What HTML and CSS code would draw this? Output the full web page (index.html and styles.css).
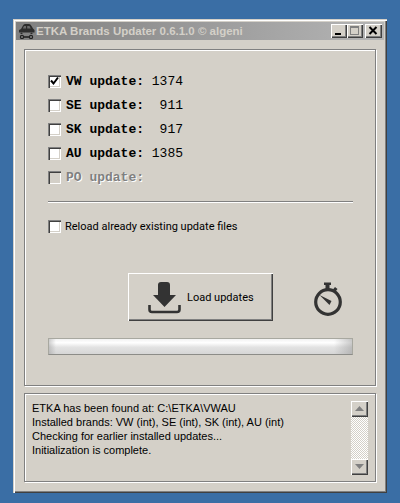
FILE: index.html
```html
<!DOCTYPE html>
<html lang="en">
<head>
<meta charset="utf-8">
<title>ETKA Brands Updater</title>
<link rel="stylesheet" href="styles.css">
</head>
<body>
<div class="window">
  <div class="titlebar">
    <svg class="app-icon" width="17" height="16" viewBox="0 0 17 16">
      <path d="M1 9.5 V7 L3 6 L5 2.5 Q5.5 1 7 1 H11 Q12.5 1 13.5 3 L15 5.5 L16.5 7 V9.5 Z" fill="#2c2c2c"/>
      <path d="M6 3 H8 V5.5 H4.8 Z M9.2 3 H11.5 L12.8 5.5 H9.2 Z" fill="#6a6a6a"/>
      <path d="M2 11 L3.5 9.5 L5 11 Z M12 11 L13.5 9.5 L15 11 Z" fill="#2c2c2c"/>
      <circle cx="4" cy="14" r="1.6" fill="none" stroke="#222" stroke-width="1.2"/>
      <circle cx="13" cy="14" r="1.6" fill="none" stroke="#222" stroke-width="1.2"/>
      <path d="M5.5 14 H11.5" stroke="#222" stroke-width="1.6"/>
    </svg>
    <span class="title-text">ETKA Brands Updater 0.6.1.0 © algeni</span>
    <div class="controls">
      <div class="ctl">
        <svg width="16" height="14" viewBox="0 0 16 14"><path d="M4 9 H10 V11 H4 Z" fill="#000"/></svg>
      </div>
      <div class="ctl ctl-max">
        <svg width="16" height="14" viewBox="0 0 16 14"><path d="M3 2 H12 V11 H3 Z M4 4 V10 H11 V4 Z" fill="#808080" fill-rule="evenodd"/></svg>
      </div>
      <div class="ctl ctl-close">
        <svg width="17" height="14" viewBox="0 0 17 14"><path d="M4.5 3 L11.5 10 M11.5 3 L4.5 10" stroke="#000" stroke-width="2" fill="none"/></svg>
      </div>
    </div>
  </div>

  <section class="group group-main">
    <div class="brand-list">
      <label class="brand">
        <span class="check"><svg width="11" height="11" viewBox="0 0 11 11"><path d="M2 4.5 L4.5 7.5 L9 1.5" stroke="#000" stroke-width="2" fill="none"/></svg></span>
        <span class="mono"><b>VW update:</b> 1374</span>
      </label>
      <label class="brand">
        <span class="check"></span>
        <span class="mono"><b>SE update:</b>  911</span>
      </label>
      <label class="brand">
        <span class="check"></span>
        <span class="mono"><b>SK update:</b>  917</span>
      </label>
      <label class="brand">
        <span class="check"></span>
        <span class="mono"><b>AU update:</b> 1385</span>
      </label>
      <label class="brand brand-off">
        <span class="check check-off"></span>
        <span class="mono"><b>PO update:</b></span>
      </label>
    </div>
    <div class="separator"></div>
    <label class="reload">
      <span class="check"></span>
      <span class="reload-text">Reload already existing update files</span>
    </label>
    <div class="action-row">
      <button class="load" type="button">
        <svg width="33" height="33" viewBox="0 0 33 33">
          <path d="M10 4 Q10 1 13 1 H19 Q22 1 22 4 V14 H28 L16.5 26 L5 14 H10 Z" fill="#333"/>
          <path d="M1.5 24 V28.5 Q1.5 31 4 31 H29 Q31.5 31 31.5 28.5 V24" fill="none" stroke="#333" stroke-width="2.6"/>
        </svg>
        <span class="load-text">Load updates</span>
      </button>
      <svg class="watch" width="30" height="34" viewBox="0 0 30 34">
        <path d="M11 0.5 H18 V3 H16.5 V8 H12.5 V3 H11 Z" fill="#333"/>
        <path d="M22 5 L24.5 7 L22.5 9.5 L20 7.5 Z" fill="#333"/>
        <circle cx="15" cy="20" r="12.3" fill="none" stroke="#333" stroke-width="3.2"/>
        <path d="M6.5 13 L18.5 19 L16.5 23 Z" fill="#333"/>
      </svg>
    </div>
    <div class="progress"></div>
  </section>

  <section class="group group-log">
    <div class="log">
      <div>ETKA has been found at: C:\ETKA\VWAU</div>
      <div>Installed brands: VW (int), SE (int), SK (int), AU (int)</div>
      <div>Checking for earlier installed updates...</div>
      <div>Initialization is complete.</div>
    </div>
    <div class="scrollbar">
      <div class="sb-btn"><svg width="9" height="6" viewBox="0 0 9 6"><path d="M4.5 0 L9 5 H0 Z" fill="#808080"/></svg></div>
      <div class="sb-track"></div>
      <div class="sb-btn"><svg width="9" height="6" viewBox="0 0 9 6"><path d="M0 0 H9 L4.5 5 Z" fill="#808080"/></svg></div>
    </div>
  </section>
</div>
</body>
</html>
```

FILE: styles.css
```css
* { box-sizing: border-box; }
html, body { margin: 0; padding: 0; }
body {
  width: 400px;
  height: 503px;
  background: #3a6ea5;
  overflow: hidden;
  padding: 19px 0 0 13px;
}
.window {
  width: 374px;
  height: 474px;
  background: #d4d0c8;
  padding: 3px;
  box-shadow: inset 1px 1px 0 #d4d0c8, inset 2px 2px 0 #fff, inset -1px -1px 0 #404040, inset -2px -2px 0 #808080;
}
.titlebar {
  height: 18px;
  background: linear-gradient(90deg, #808080, #b5b5b5);
  display: flex;
  align-items: center;
  padding-left: 2px;
}
.app-icon { flex: none; }
.title-text {
  margin-left: 1px;
  font: bold 11.5px/18px "Liberation Sans", sans-serif;
  color: #d4d0c8;
  white-space: nowrap;
}
.controls {
  margin-left: auto;
  display: flex;
  margin-right: 2px;
  height: 14px;
}
.ctl {
  width: 16px;
  height: 14px;
  background: #d4d0c8;
  box-shadow: inset 1px 1px 0 #fff, inset -1px -1px 0 #404040, inset -2px -2px 0 #808080;
  margin-right: 0;
  display: flex;
}
.ctl-close { width: 17px; margin-left: 2px; }
.group {
  margin: 9px 0 0 8px;
  width: 352px;
  border: 1px solid #808080;
  box-shadow: inset 1px 1px 0 #fff, 1px 1px 0 #fff;
}
.group-main {
  height: 337px;
  padding: 25px 0 0 23px;
}
.group-log {
  margin-top: 7px;
  height: 89px;
  padding: 7px 7px 0 7px;
  display: flex;
  justify-content: space-between;
}
.brand-list {
  display: flex;
  flex-direction: column;
  gap: 11px;
}
.brand {
  display: flex;
  align-items: center;
  height: 13px;
  gap: 5px;
}
.check {
  flex: none;
  width: 13px;
  height: 13px;
  background: #fff;
  box-shadow: inset 1px 1px 0 #808080, inset 2px 2px 0 #404040, inset -1px -1px 0 #fff, inset -2px -2px 0 #d4d0c8;
  display: flex;
  align-items: center;
  justify-content: center;
}
.check-off { background: #d4d0c8; }
.mono {
  font: 13px/13px "Liberation Mono", monospace;
  color: #000;
  white-space: pre;
}
.brand-off .mono {
  color: #808080;
  text-shadow: 1px 1px 0 #fff;
}
.separator {
  margin-top: 17px;
  width: 305px;
  height: 2px;
  background: #808080;
  border-bottom: 1px solid #fff;
}
.reload {
  margin-top: 17px;
  display: flex;
  align-items: center;
  gap: 4px;
  height: 13px;
}
.reload-text {
  font: 11px/13px Roboto, sans-serif;
  color: #000;
  white-space: nowrap;
}
.action-row {
  margin: 40px 0 0 80px;
  display: flex;
  align-items: flex-start;
}
.load {
  width: 145px;
  height: 48px;
  padding: 8px 0 0 20px;
  border: 0;
  background: #d4d0c8;
  box-shadow: inset 1px 1px 0 #fff, inset -1px -1px 0 #404040, inset -2px -2px 0 #808080;
  display: flex;
  align-items: flex-start;
}
.load-text {
  margin: 10px 0 0 6px;
  font: 11px/14px Roboto, sans-serif;
  color: #000;
  white-space: nowrap;
}
.watch {
  flex: none;
  margin: 9px 0 0 40px;
}
.progress {
  margin-top: 17px;
  width: 305px;
  height: 17px;
  border: 1px solid #a8a8a0;
  border-bottom-color: #8c8c88;
  background:
    linear-gradient(90deg, rgba(150,150,150,.45), rgba(150,150,150,0) 7px, rgba(150,150,150,0) calc(100% - 18px), rgba(150,150,150,.5)),
    linear-gradient(180deg, #f2f2f2, #ffffff 25%, #e2e2e2 55%, #d6d6d6);
}
.log {
  font: 11px/14px "Liberation Sans", sans-serif;
  color: #000;
  white-space: nowrap;
}
.scrollbar {
  flex: none;
  margin-right: 0;
  width: 17px;
  height: 74px;
  display: flex;
  flex-direction: column;
}
.sb-btn {
  height: 16px;
  background: #d4d0c8;
  box-shadow: inset 1px 1px 0 #fff, inset -1px -1px 0 #404040, inset -2px -2px 0 #808080;
  display: flex;
  align-items: center;
  justify-content: center;
}
.sb-track {
  flex: 1;
  background: repeating-conic-gradient(#fff 0 25%, #d4d0c8 0 50%) 0 0 / 2px 2px;
}
```
